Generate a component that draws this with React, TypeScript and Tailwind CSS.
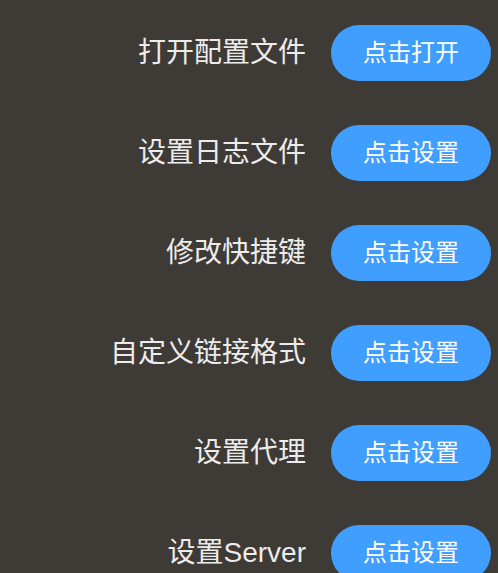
const rows = [
  { label: "打开配置文件", action: "点击打开" },
  { label: "设置日志文件", action: "点击设置" },
  { label: "修改快捷键", action: "点击设置" },
  { label: "自定义链接格式", action: "点击设置" },
  { label: "设置代理", action: "点击设置" },
  { label: "设置Server", action: "点击设置" },
];

export default function App() {
  return (
    <div
      className="w-[498px] h-[573px] overflow-hidden bg-[#3e3a36] pt-[25px] pr-[7px]"
      style={{ fontFamily: '"Liberation Sans", "Noto Sans CJK SC", sans-serif' }}
    >
      <div className="flex flex-col gap-[44px]">
        {rows.map((row, i) => (
          <div key={i} className="flex items-center justify-end gap-[25px]">
            <span className="text-[28px] leading-none text-[#ececec]">{row.label}</span>
            <button className="w-[160px] h-[56px] rounded-full bg-[#409eff] text-white text-[24px] leading-none">
              {row.action}
            </button>
          </div>
        ))}
      </div>
    </div>
  );
}
